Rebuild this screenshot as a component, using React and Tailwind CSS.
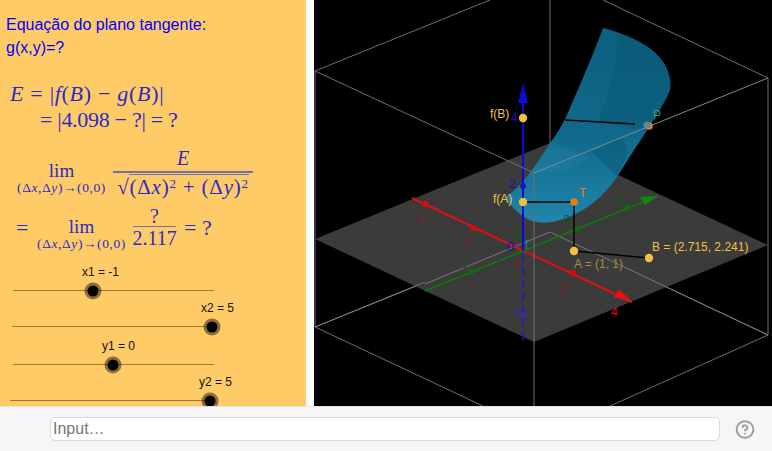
const serif = '"Liberation Serif", "Times New Roman", serif';

function Slider({ label, labelLeft, trackLeft, value, mt }) {
  return (
    <div className={mt}>
      <div className="h-[15px] text-[12px] leading-[15px] text-[#111]" style={{ marginLeft: labelLeft }}>{label}</div>
      <div className="relative mt-[10px] h-px w-[201px] bg-[#a07a33]" style={{ marginLeft: trackLeft }}>
        <span
          className="absolute top-1/2 flex h-[17px] w-[17px] -translate-x-1/2 -translate-y-1/2 items-center justify-center rounded-full bg-black/45"
          style={{ left: value }}
        >
          <span className="h-[11px] w-[11px] rounded-full bg-black" />
        </span>
      </div>
    </div>
  );
}

function Lim({ className }) {
  return (
    <div className={`flex w-[91px] flex-col items-center ${className}`}>
      <span className="text-[19px] leading-[20px]">lim</span>
      <span className="whitespace-nowrap text-[13.5px] leading-[13px] tracking-[0.6px]">
        (Δ<i>x</i>,Δ<i>y</i>)→(0,0)
      </span>
    </div>
  );
}

function MathPanel() {
  return (
    <div className="text-[#2a2acb]" style={{ fontFamily: serif }}>
      <div className="mt-[22px] ml-[10px] whitespace-nowrap text-[22px] leading-[26px] tracking-[0.7px]">
        <i>E</i> = |<i>f</i>(<i>B</i>) − <i>g</i>(<i>B</i>)|
      </div>
      <div className="ml-[40px] whitespace-nowrap text-[22px] leading-[26px] tracking-[-0.3px]">= |4.098 − ?| = ?</div>

      <div className="mt-[14px] ml-[16px] flex items-start">
        <Lim className="mt-[14px]" />
        <div className="ml-[6px] flex w-[140px] flex-col items-center">
          <i className="h-[24px] text-[20px] leading-[23px]">E</i>
          <div className="h-[2px] w-full bg-[#6f6fb5]" />
          <div className="whitespace-nowrap pt-[2px] text-[21px] leading-[25px] tracking-[0.8px]">
            √<span className="border-t border-[#6f6fb5]">(Δ<i>x</i>)<sup className="text-[13px]">2</sup> + (Δ<i>y</i>)<sup className="text-[13px]">2</sup></span>
          </div>
        </div>
      </div>

      <div className="ml-[16px] flex items-start">
        <span className="mt-[16px] w-[20px] text-[22px] leading-[24px]">=</span>
        <Lim className="mt-[17px]" />
        <div className="mt-[6px] ml-[6px] flex w-[43px] flex-col items-center">
          <span className="h-[20px] text-[20px] leading-[20px]">?</span>
          <div className="h-px w-full bg-[#6f6fb5]" />
          <span className="text-[20px] leading-[22px]">2.117</span>
        </div>
        <span className="mt-[16px] ml-[8px] whitespace-nowrap text-[22px] leading-[24px]">= ?</span>
      </div>
    </div>
  );
}

function Graph3D() {
  const label = { fontFamily: '"Liberation Sans", Arial, sans-serif' };
  return (
    <svg viewBox="314 0 458 406" className="block h-full w-full" style={label}>
      <defs>
        <linearGradient id="surf" x1="0" y1="0" x2="0" y2="1">
          <stop offset="0" stopColor="#0c5f7f" />
          <stop offset="0.55" stopColor="#10698b" />
          <stop offset="1" stopColor="#2086ac" />
        </linearGradient>
      </defs>
      <g stroke="#6e6e6e" strokeWidth="1" fill="none">
        <path d="M315 71L490 0M550 0V233M603 0L768 78" />
        <path d="M315 71V327M768 78V335M315 327L550 232L768 335L610 406M315 327L483 406" />
      </g>
      <polygon points="315,239 550,143 768,245 534,342" fill="#3b3b3b" />
      <path d="M315 327L425 282M550 232L425 284M550 232L768 335" stroke="#7a7a7a" fill="none" />

      <path d="M603 28C630 35 655 47 665 65C670 74 671 82 670 90C662 110 640 140 617 177C605 195 585 213 560 220C545 225 530 223 520 214C513 208 508 202 505 197C518 190 532 172 550 143C558 133 565 120 570 108C580 85 595 50 603 28Z" fill="url(#surf)" />
      <path d="M618 33C617 60 610 95 597 122L645 131C655 117 665 102 670 90C671 82 670 74 665 65C656 49 638 39 618 33Z" fill="#0a5470" opacity="0.4" />
      <path d="M592 152L622 136L628 152L617 177L606 166Z" fill="#0a5470" opacity="0.45" />
      <path d="M551 143L590 158L560 172L530 173Z" fill="#2b8cb0" opacity="0.25" />

      <path d="M412 198L632 302" stroke="#e01010" strokeWidth="2" />
      <path d="M425 291L658 196" stroke="#0d7a0d" strokeWidth="1.6" />
      <path d="M523 340V251" stroke="#1818d0" strokeWidth="1.5" strokeDasharray="8 5" />
      <path d="M523 251V100" stroke="#0b0bd8" strokeWidth="2" />
      <polygon points="523,83 518,103 528,103" fill="#0b0bd8" />
      <polygon points="632,302 614,297 619,289" fill="#e81010" />
      <polygon points="658,196 640,197 645,205" fill="#0f8a0f" />

      <path d="M534 173V406" stroke="#6e6e6e" />
      <path d="M534 173L768 78" stroke="#7d8b90" />
      <path d="M315 71L534 173" stroke="#6e6e6e" />

      <g fill="#d01010"><circle cx="425" cy="204" r="3.2" /><circle cx="474" cy="228" r="3.2" /><circle cx="573" cy="273" r="3.2" /></g>
      <g fill="#0d6e0d"><circle cx="471" cy="272" r="3" /><circle cx="577" cy="229" r="3" /><circle cx="628" cy="207" r="3" /></g>
      <g fill="#1414c8"><circle cx="523" cy="186" r="3" /></g>
      <circle cx="523" cy="315" r="3" fill="#3430a8" />

      <g stroke="#000" strokeWidth="1.4">
        <path d="M565 120L635 124" />
        <path d="M523 202L574 202" />
        <path d="M574 202V251" />
        <path d="M574 251L649 258" />
      </g>

      <circle cx="649" cy="126" r="3.8" fill="#ef7c10" />
      <circle cx="647" cy="125" r="3.5" fill="#5f8a90" />
      <circle cx="574" cy="202" r="3.8" fill="#ef7c10" />
      <g fill="#f2c23e">
        <circle cx="523" cy="118" r="4.2" />
        <circle cx="523" cy="202" r="4.2" />
        <circle cx="574" cy="251" r="4.2" />
        <circle cx="649" cy="258" r="4.2" />
      </g>

      <g fontSize="12">
        <text x="490" y="118" fill="#f2c23e">f(B)</text>
        <text x="493" y="203" fill="#f2c23e">f(A)</text>
        <text x="652" y="251" fill="#f2c23e">B = (2.715, 2.241)</text>
        <text x="574" y="268" fill="#a88a44">A = (1, 1)</text>
        <text x="579" y="197" fill="#ef7c10">T</text>
        <text x="653" y="119" fill="#5f8a90">P</text>
        <text x="511" y="122" fill="#1010c8">4</text>
        <text x="509" y="188" fill="#1010c8">2</text>
        <text x="507" y="251" fill="#1010c8">0</text>
        <text x="510" y="316" fill="#3430a8">-2</text>
        <text x="412" y="224" fill="#7a1f1f">-4</text>
        <text x="461" y="247" fill="#7a1f1f">-2</text>
        <text x="513" y="269" fill="#7a1f1f">0</text>
        <text x="561" y="292" fill="#7a1f1f">2</text>
        <text x="611" y="316" fill="#e01010">4</text>
        <text x="458" y="268" fill="#0d5a0d">-2</text>
        <text x="563" y="224" fill="#0d5a0d">2</text>
        <text x="616" y="203" fill="#0d5a0d">4</text>
        <text x="513" y="239" fill="#0d5a0d">0</text>
        <text x="525" y="249" fill="#1d82a8">f</text>
      </g>
    </svg>
  );
}

export default function App() {
  return (
    <div className="flex h-[451px] w-[772px] flex-col overflow-hidden bg-[#f6f6f6]" style={{ fontFamily: '"Liberation Sans", Arial, sans-serif' }}>
      <div className="flex h-[406px]">
        <div className="h-full w-[306px] shrink-0 overflow-hidden bg-[#ffcb66] pt-[13px]">
          <div className="ml-[6px] text-[16px] leading-[23px] text-[#0000ff]">
            <div>Equação do plano tangente:</div>
            <div>g(x,y)=?</div>
          </div>
          <MathPanel />
          <div className="mt-[15px]">
            <Slider label="x1 = -1" labelLeft={82} trackLeft={13} value={80} />
            <Slider label="x2 = 5" labelLeft={201} trackLeft={12} value={200} mt="mt-[10px]" />
            <Slider label="y1 = 0" labelLeft={102} trackLeft={13} value={100} mt="mt-[12px]" />
            <Slider label="y2 = 5" labelLeft={199} trackLeft={10} value={200} mt="mt-[10px]" />
          </div>
        </div>
        <div className="h-full w-[8px] shrink-0 bg-white" />
        <div className="h-full flex-1 bg-black">
          <Graph3D />
        </div>
      </div>
      <div className="flex flex-1 items-center border-t border-[#e4e4e4] pl-[50px] pr-[17px]">
        <input
          placeholder="Input…"
          className="h-[24px] w-[670px] shrink-0 rounded-[5px] border border-[#d9d9d9] bg-white px-[2px] text-[16px] text-[#333] outline-none placeholder:text-[#757575]"
        />
        <svg viewBox="0 0 24 24" className="ml-[15px] h-[21px] w-[21px]" fill="none" stroke="#9e9e9e" strokeWidth="2.4" strokeLinecap="round">
          <circle cx="12" cy="12" r="10" />
          <path d="M9.09 9a3 3 0 0 1 5.83 1c0 2-3 3-3 3" />
          <path d="M12 17h.01" />
        </svg>
      </div>
    </div>
  );
}
